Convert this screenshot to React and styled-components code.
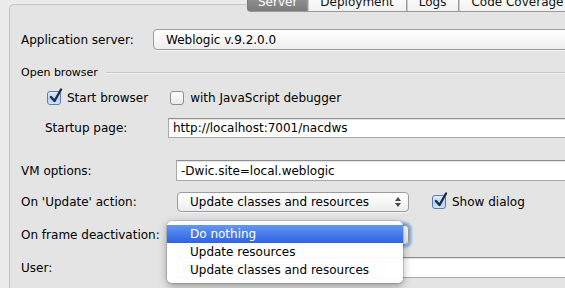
import React from 'react'
import styled, { createGlobalStyle } from 'styled-components'

const GlobalStyle = createGlobalStyle`
  html, body {
    margin: 0;
    padding: 0;
    background: #ececec;
    overflow: hidden;
  }
  body {
    font-family: "DejaVu Sans", "Liberation Sans", sans-serif;
    font-size: 12px;
    color: #000;
  }
`

const Page = styled.div`
  width: 565px;
  height: 288px;
  padding: 4px 0 0 9px;
  box-sizing: border-box;
  overflow: hidden;
`

const Panel = styled.div`
  position: relative;
  width: 640px;
  height: 320px;
  box-sizing: border-box;
  background: #e4e4e4;
  border-top: 1px solid #c4c4c4;
  border-left: 1px solid #c4c4c4;
  border-top-left-radius: 5px;
  padding: 24px 0 0 11px;
`

const TabBar = styled.div`
  position: absolute;
  top: -13px;
  left: 237px;
  display: flex;
  height: 20px;
`

const Tab = styled.div`
  display: flex;
  align-items: center;
  padding: 0 ${p => p.$pad || 12}px;
  height: 20px;
  box-sizing: border-box;
  border: 1px solid #9a9a9a;
  border-left: ${p => (p.$first ? '1px solid #7a7a7a' : 'none')};
  border-bottom-left-radius: ${p => (p.$first ? '4px' : '0')};
  background: ${p =>
    p.$active
      ? 'linear-gradient(#9a9a9a, #7c7c7c)'
      : 'linear-gradient(#ffffff, #f1f1f1)'};
  color: ${p => (p.$active ? '#fff' : '#111')};
  white-space: nowrap;
  & + & {
    box-shadow: inset 1px 0 0 #c9c9c9;
  }
`

const Row = styled.div`
  display: flex;
  align-items: center;
  height: ${p => p.$h || 21}px;
  margin-top: ${p => p.$mt || 0}px;
  padding-left: ${p => p.$indent || 0}px;
`

const Label = styled.span`
  width: ${p => p.$w}px;
  flex-shrink: 0;
  white-space: nowrap;
`

const TextField = styled.div`
  flex: 1;
  height: 100%;
  box-sizing: border-box;
  background: #fff;
  border: 1px solid #a8a8a8;
  border-top-color: #8e8e8e;
  box-shadow: inset 0 1px 1px rgba(0, 0, 0, 0.12);
  padding-left: 4px;
  display: flex;
  align-items: center;
  color: ${p => p.$color || '#000'};
  white-space: nowrap;
`

const Combo = styled.div`
  position: relative;
  width: ${p => (p.$w ? `${p.$w}px` : 'auto')};
  flex: ${p => (p.$w ? '0 0 auto' : '1')};
  height: 100%;
  box-sizing: border-box;
  border: 1px solid #9c9c9c;
  border-radius: 4px;
  background: linear-gradient(#ffffff, #f7f7f7 50%, #ececec);
  box-shadow: ${p =>
    p.$focus
      ? '0 0 0 1px #7fa8e8, 0 0 2px 3px rgba(92, 145, 230, 0.55)'
      : '0 1px 0 rgba(255,255,255,0.5)'};
  display: flex;
  align-items: center;
  padding-left: 12px;
  white-space: nowrap;
`

const Arrows = styled.svg`
  position: absolute;
  right: 7px;
  top: 50%;
  margin-top: -5px;
`

const GroupHeader = styled.div`
  display: flex;
  align-items: center;
  height: 16px;
  margin-top: 14px;
  gap: 8px;
`

const GroupLine = styled.div`
  flex: 1;
  height: 1px;
  background: #c8c8c8;
  box-shadow: 0 1px 0 #f2f2f2;
`

const Small = styled.span`
  font-size: 11px;
`

const CheckWrap = styled.label`
  display: flex;
  align-items: center;
  gap: 6px;
  margin-left: ${p => p.$ml || 0}px;
  white-space: nowrap;
`

const Box = styled.span`
  width: 14px;
  height: 14px;
  box-sizing: border-box;
  border-radius: 3px;
  border: 1px solid ${p => (p.$checked ? '#5d7aa8' : '#8e8e8e')};
  background: ${p =>
    p.$checked
      ? 'linear-gradient(#e2eefc, #b7d3f5 55%, #cfe3fb)'
      : 'linear-gradient(#ffffff, #e9e9e9)'};
  position: relative;
  flex-shrink: 0;
`

const Tick = styled.svg`
  position: absolute;
  left: 1px;
  top: -4px;
`

const Popup = styled.div`
  position: absolute;
  left: 157px;
  top: 216px;
  width: 236px;
  padding: 4px 0;
  background: rgba(255, 255, 255, 0.94);
  border-radius: 5px;
  box-shadow: 0 0 0 1px rgba(0, 0, 0, 0.12), 0 3px 8px rgba(0, 0, 0, 0.35);
  z-index: 5;
`

const Item = styled.div`
  height: 18px;
  display: flex;
  align-items: center;
  padding-left: 23px;
  white-space: nowrap;
  color: ${p => (p.$selected ? '#fff' : '#000')};
  background: ${p =>
    p.$selected ? 'linear-gradient(#6496f2, #2d63e6)' : 'transparent'};
`

const Check = ({ checked, label, ml }) => (
  <CheckWrap $ml={ml}>
    <Box $checked={checked}>
      {checked && (
        <Tick width="14" height="16" viewBox="0 0 14 16">
          <path
            d="M2 9 L5.5 13 L12 1.5"
            fill="none"
            stroke="#1d2c4c"
            strokeWidth="2.4"
            strokeLinecap="round"
            strokeLinejoin="round"
          />
        </Tick>
      )}
    </Box>
    {label}
  </CheckWrap>
)

const UpDown = () => (
  <Arrows width="6" height="10" viewBox="0 0 6 10">
    <path d="M3 0 L6 4 L0 4 Z M0 6 L6 6 L3 10 Z" fill="#4a4a4a" />
  </Arrows>
)

const App = () => {
  return (
    <Page>
      <GlobalStyle />
      <Panel>
        <TabBar>
          <Tab $active $first $pad={10}>Server</Tab>
          <Tab>Deployment</Tab>
          <Tab>Logs</Tab>
          <Tab>Code Coverage</Tab>
        </TabBar>

        <Row $h={21}>
          <Label $w={132}>Application server:</Label>
          <Combo>Weblogic v.9.2.0.0</Combo>
        </Row>

        <GroupHeader>
          <Small>Open browser</Small>
          <GroupLine />
        </GroupHeader>

        <Row $h={16} $mt={10} $indent={26}>
          <Check checked label="Start browser" />
          <Check label="with JavaScript debugger" ml={22} />
        </Row>

        <Row $h={20} $mt={12} $indent={24}>
          <Label $w={123}>Startup page:</Label>
          <TextField>http://localhost:7001/nacdws</TextField>
        </Row>

        <Row $h={21} $mt={22}>
          <Label $w={155}>VM options:</Label>
          <TextField>-Dwic.site=local.weblogic</TextField>
        </Row>

        <Row $h={20} $mt={11}>
          <Label $w={156}>On 'Update' action:</Label>
          <Combo $w={232}>
            Update classes and resources
            <UpDown />
          </Combo>
          <Check checked label="Show dialog" ml={23} />
        </Row>

        <Row $h={20} $mt={13}>
          <Label $w={156}>On frame deactivation:</Label>
          <Combo $w={232} $focus>
            Do nothing
            <UpDown />
          </Combo>
        </Row>

        <Row $h={21} $mt={12}>
          <Label $w={156}>User:</Label>
          <TextField $color="#555">weblogic</TextField>
        </Row>

        <Popup>
          <Item $selected>Do nothing</Item>
          <Item>Update resources</Item>
          <Item>Update classes and resources</Item>
        </Popup>
      </Panel>
    </Page>
  )
}

export default App
